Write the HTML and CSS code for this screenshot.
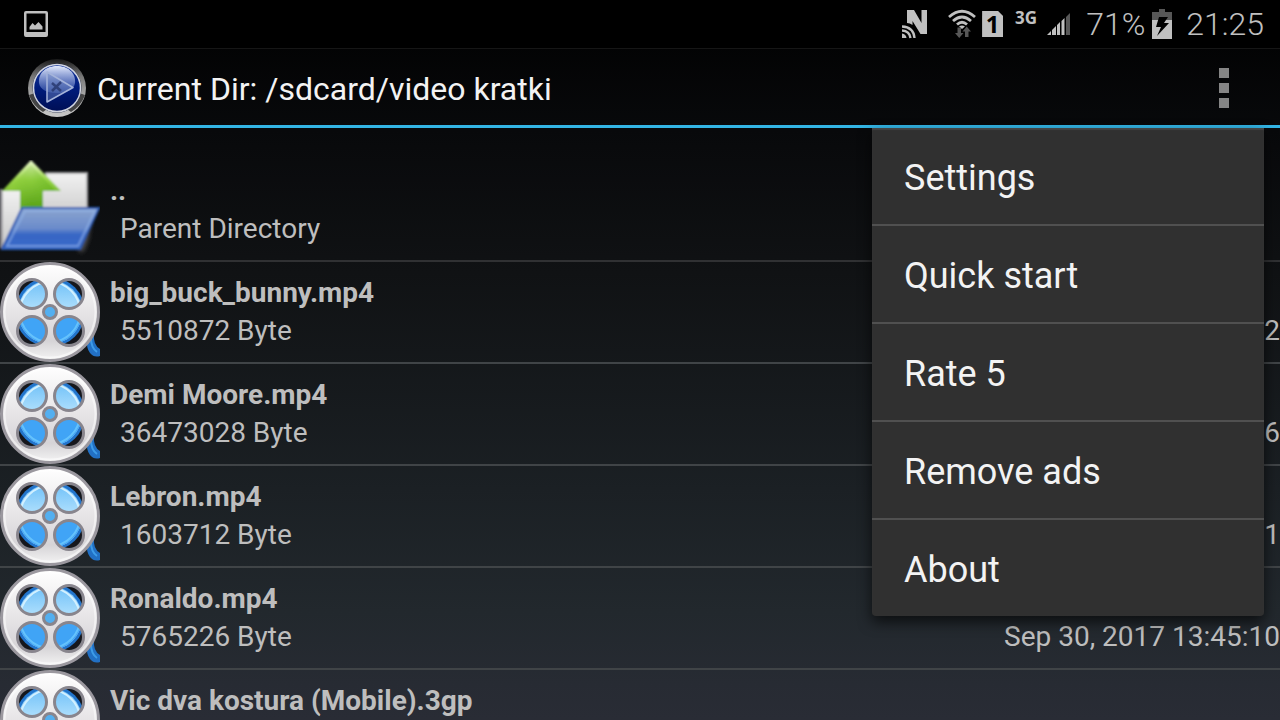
FILE: index.html
```
<!DOCTYPE html>
<html lang="en">
<head>
<meta charset="utf-8">
<meta name="viewport" content="width=device-width, initial-scale=1">
<title>Current Dir: /sdcard/video kratki</title>
<link rel="stylesheet" href="styles.css">
</head>
<body>
<svg class="defs" width="0" height="0" aria-hidden="true">
  <defs>
    <linearGradient id="reelBody" x1="0" y1="0" x2="0" y2="1">
      <stop offset="0" stop-color="#ffffff"/><stop offset=".45" stop-color="#e9e7e9"/><stop offset=".8" stop-color="#d6d4d7"/><stop offset="1" stop-color="#f4f4f4"/>
    </linearGradient>
    <linearGradient id="filmTop" x1="0" y1="0" x2="0" y2="1">
      <stop offset="0" stop-color="#6fc0f8"/><stop offset=".5" stop-color="#b4e2fd"/>
    </linearGradient>
    <filter id="reelSmooth" x="0" y="0" width="1" height="1"><feGaussianBlur stdDeviation=".6"/></filter>
    <clipPath id="holes"><circle cx="32" cy="32" r="14"/><circle cx="69" cy="32" r="14"/><circle cx="32" cy="69" r="14"/><circle cx="69" cy="69" r="14"/></clipPath>
    <symbol id="reel" viewBox="0 0 100 100">
      <g filter="url(#reelSmooth)">
        <path d="M87 76L94 72Q93 83 100 87V94Q94 96 90 91Q86 86 87 76Z" fill="#2070c4"/>
        <path d="M91 76Q91 86 97 90" fill="none" stroke="#3e9be8" stroke-width="2"/>
        <circle cx="50" cy="50" r="48.500" fill="url(#reelBody)" stroke="#9b989f" stroke-width="3"/>
        <circle cx="50" cy="50" r="45.500" fill="none" stroke="#fff" stroke-opacity=".5" stroke-width="2"/>
        <g clip-path="url(#holes)">
          <path d="M0 0H100V100H0Z" fill="#13191e"/>
          <circle cx="50" cy="50" r="35" fill="#2474cc"/>
          <circle cx="50" cy="50" r="32" fill="url(#filmTop)"/>
          <path d="M18 50A32 32 0 0 0 82 50Z" fill="#40a4f6"/>
          <path d="M20 50A30 30 0 0 1 80 50" fill="none" stroke="#d2f0ff" stroke-width="2"/>
          <path d="M20 50A30 30 0 0 0 80 50" fill="none" stroke="#65c2fc" stroke-width="2"/>
        </g>
        <g fill="none" stroke="#88858d" stroke-width="3"><circle cx="32" cy="32" r="14.500"/><circle cx="69" cy="32" r="14.500"/><circle cx="32" cy="69" r="14.500"/><circle cx="69" cy="69" r="14.500"/></g>
        <circle cx="50" cy="50" r="6.500" fill="#52aff0" stroke="#88858d" stroke-width="3"/>
      </g>
    </symbol>
  </defs>
</svg>

<div class="screen">
  <header class="status-bar">
    <svg class="shot-icon" width="24" height="26" viewBox="0 0 24 26" role="img" aria-label="Screenshot saved">
      <path fill="#c0c0c0" fill-rule="evenodd" d="M2 0H22Q24 0 24 2V24Q24 26 22 26H2Q0 26 0 24V2Q0 0 2 0ZM2.500 2.500V21H21.500V2.500Z"/>
      <path fill="#c0c0c0" d="M5.500 18.500V16L8.500 12L11 14.500L14.500 11L18.500 15.500V18.500Z"/>
    </svg>
    <div class="status-right">
      <svg width="26" height="30" viewBox="0 0 26 30" role="img" aria-label="NFC">
        <path fill="#c0c0c0" d="M5 1H12L19.500 14V1H25V25H18.500L10.500 12V16Q8 14 5 14Z"/>
        <g fill="none" stroke="#c0c0c0" stroke-width="2.400"><path d="M0 17.500Q11.500 18 12.500 29"/><path d="M0 21.500Q7.500 22 8.500 29"/></g>
        <path fill="#c0c0c0" d="M0 24.500Q4 25 4.500 29H0Z"/>
      </svg>
      <svg class="wifi" width="28" height="30" viewBox="0 0 28 30" role="img" aria-label="Wi-Fi">
        <g fill="none" stroke="#c0c0c0" stroke-width="2.800"><path d="M1 8Q14-3.500 27 8"/><path d="M5 12Q14 4 23 12"/><path d="M9 15.500Q14 11 19 15.500"/></g>
        <path fill="#c0c0c0" d="M11 17.500Q14 15.500 17 17.500L14 20Z"/>
        <g fill="#575757"><path d="M9.500 18.500H13V24H15.500L11.200 29L7 24H9.500Z"/><path d="M17 28H20.500V22.500H23L18.700 17.500L14.500 22.500H17Z"/></g>
      </svg>
      <span class="sim">1</span>
      <span class="network">3G</span>
      <svg class="signal" width="24" height="24" viewBox="0 0 24 24" role="img" aria-label="Signal strength">
        <path fill="#c0c0c0" d="M0 23L4 19V23ZM5 18L9 14V23H5ZM10 13L13 10V23H10ZM14.500 9L17.500 6V23H14.500Z"/>
        <path fill="#575757" d="M19 5L23 1V23H19Z"/>
      </svg>
      <span class="battery-level">71%</span>
      <svg class="battery" width="20" height="30" viewBox="0 0 20 30" role="img" aria-label="Battery charging">
        <path fill="#575757" d="M7 0H13V3H20V11H0V3H7Z"/>
        <path fill="#c0c0c0" d="M0 11H20V30H0Z"/>
        <path fill="#000" d="M7 8H16L12 14H17L5 27L9 18H4Z"/>
      </svg>
      <time class="clock">21:25</time>
    </div>
  </header>

  <div class="app-bar">
    <svg class="app-logo" width="60" height="60" viewBox="0 0 60 60" role="img" aria-label="Video player">
      <defs>
        <linearGradient id="rim" x1="0" y1="0" x2="0" y2="1"><stop offset="0" stop-color="#191919"/><stop offset=".3" stop-color="#777"/><stop offset=".6" stop-color="#a5a5a5"/><stop offset="1" stop-color="#c8c8c8"/></linearGradient>
        <linearGradient id="orb" x1="0" y1="0" x2="0" y2="1"><stop offset="0" stop-color="#1738a0"/><stop offset=".5" stop-color="#001c7c"/><stop offset="1" stop-color="#000f55"/></linearGradient>
        <linearGradient id="gloss" x1="0" y1="0" x2="0" y2="1"><stop offset="0" stop-color="#e3eafc"/><stop offset="1" stop-color="#4a68bb" stop-opacity=".5"/></linearGradient>
      </defs>
      <circle cx="30" cy="30" r="29" fill="url(#rim)"/>
      <path d="M2 37L8 35Q12 48 20 51L16 54Q6 48 2 37ZM58 37L52 35Q48 48 40 51L44 54Q54 48 58 37Z" fill="#444"/>
      <circle cx="30" cy="30" r="24.500" fill="#101a3b"/>
      <circle cx="30" cy="30" r="23.500" fill="url(#orb)" stroke="#d2d5df" stroke-width="1.500"/>
      <path d="M12 25C11 14 20 8 30 8S49 14 48 25C47 32 39 35 30 35S13 32 12 25Z" fill="url(#gloss)"/>
      <path d="M20 14L46 29.500L20 44Z" fill="#6c85c2" fill-opacity=".45" stroke="#a5b4da" stroke-width="1.500" stroke-linejoin="round"/>
      <path d="M25 25L34 33M34 24L25 33" stroke="#26366b" stroke-opacity=".8" stroke-width="2.500"/>
    </svg>
    <h1 class="title">Current Dir: /sdcard/video kratki</h1>
    <button class="more" type="button" aria-label="More options" aria-haspopup="menu" aria-expanded="true"><span class="dot"></span><span class="dot"></span><span class="dot"></span></button>
  </div>

  <main class="content">
    <ul class="files">
      <li class="row row-parent">
        <svg class="thumb" viewBox="0 0 100 100" aria-hidden="true">
          <defs>
            <linearGradient id="arrow" x1="0" y1="0" x2="0" y2="1"><stop offset="0" stop-color="#eefad0"/><stop offset=".4" stop-color="#98d545"/><stop offset="1" stop-color="#539b14"/></linearGradient>
            <linearGradient id="arrowSide" x1="0" y1="0" x2="1" y2="0"><stop offset="0" stop-color="#a4dc43" stop-opacity=".8"/><stop offset=".5" stop-color="#5bad18" stop-opacity=".3"/><stop offset="1" stop-color="#5faf19"/></linearGradient>
            <linearGradient id="folder" x1="0" y1="0" x2="0" y2="1"><stop offset="0" stop-color="#8ca5cf"/><stop offset=".5" stop-color="#6a8bcb"/><stop offset=".65" stop-color="#3866c5"/><stop offset="1" stop-color="#3768c8"/></linearGradient>
            <linearGradient id="paper" x1="0" y1="0" x2="0" y2="1"><stop offset="0" stop-color="#f1f1f1"/><stop offset="1" stop-color="#c7c7c7"/></linearGradient>
            <filter id="soft"><feGaussianBlur stdDeviation="2"/></filter>
            <filter id="smooth"><feGaussianBlur stdDeviation="1"/></filter>
          </defs>
          <g filter="url(#smooth)">
            <path d="M78 91L92 56L88 80L83 92Z" fill="#555" filter="url(#soft)"/>
            <path d="M46 13H87V62H36Z" fill="url(#paper)" stroke="#a7a7a9" stroke-width="2"/>
            <path d="M0 30H22V70L0 88Z" fill="url(#paper)"/>
            <path d="M1 29V88" stroke="#88878d" stroke-width="3"/>
            <path d="M31 0L61 31H43V50H20V31H2Z" fill="url(#arrow)"/>
            <path d="M31 5L56 31H43V49H20V31H7Z" fill="url(#arrowSide)" opacity=".6"/>
            <path d="M22 48H99L80 89H2Z" fill="url(#folder)" stroke="#2c5bb4" stroke-width="2"/>
            <path d="M25 51H95L78 86H7Z" fill="none" stroke="#93b6eb" stroke-opacity=".6" stroke-width="2"/>
          </g>
        </svg>
        <div class="info"><strong class="name">..</strong><div class="meta"><span>Parent Directory</span></div></div>
      </li>
      <li class="row">
        <svg class="thumb" aria-hidden="true"><use href="#reel"/></svg>
        <div class="info"><strong class="name">big_buck_bunny.mp4</strong><div class="meta"><span>5510872 Byte</span><span>2</span></div></div>
      </li>
      <li class="row">
        <svg class="thumb" aria-hidden="true"><use href="#reel"/></svg>
        <div class="info"><strong class="name">Demi Moore.mp4</strong><div class="meta"><span>36473028 Byte</span><span>6</span></div></div>
      </li>
      <li class="row">
        <svg class="thumb" aria-hidden="true"><use href="#reel"/></svg>
        <div class="info"><strong class="name">Lebron.mp4</strong><div class="meta"><span>1603712 Byte</span><span>1</span></div></div>
      </li>
      <li class="row">
        <svg class="thumb" aria-hidden="true"><use href="#reel"/></svg>
        <div class="info"><strong class="name">Ronaldo.mp4</strong><div class="meta"><span>5765226 Byte</span><time>Sep 30, 2017 13:45:10</time></div></div>
      </li>
      <li class="row">
        <svg class="thumb" aria-hidden="true"><use href="#reel"/></svg>
        <div class="info"><strong class="name">Vic dva kostura (Mobile).3gp</strong></div>
      </li>
    </ul>
    <div class="menu" role="menu">
      <button class="menu-item" type="button" role="menuitem">Settings</button>
      <button class="menu-item" type="button" role="menuitem">Quick start</button>
      <button class="menu-item" type="button" role="menuitem">Rate 5</button>
      <button class="menu-item" type="button" role="menuitem">Remove ads</button>
      <button class="menu-item" type="button" role="menuitem">About</button>
    </div>
  </main>
</div>
</body>
</html>
```
FILE: styles.css
```
* { box-sizing: border-box; }

body {
  margin: 0;
  background: #000;
  color: #bebebe;
  font-family: Roboto, "Noto Sans", sans-serif;
}

.defs { position: absolute; }

.screen {
  display: flex;
  flex-direction: column;
  height: 100vh;
  overflow: hidden;
  background: linear-gradient(#000 0, #08090b 18%, #101214 38%, #1b2024 68%, #22282d 85%, #272b33 95%, #292c35 100%);
}

/* Status bar */
.status-bar {
  display: flex;
  align-items: center;
  justify-content: space-between;
  flex: none;
  height: 49px;
  padding: 0 16px 0 24px;
  background: #000;
  border-bottom: 1px solid #161616;
}

.status-right {
  display: flex;
  align-items: center;
  color: #c0c0c0;
}

.wifi { margin-left: 20px; }

.sim {
  width: 21px;
  height: 26px;
  margin-left: 6px;
  background: #c0c0c0;
  clip-path: polygon(0 0, 76% 0, 100% 19%, 100% 100%, 0 100%);
  color: #000;
  font: 700 24px/26px "Open Sans", sans-serif;
  text-align: center;
}

.network {
  align-self: flex-start;
  margin: 4px 0 0 12px;
  font: 700 17px/18px "Open Sans", sans-serif;
}

.signal { margin-left: 10px; }

.battery-level,
.clock {
  font-size: 32px;
  line-height: 38px;
  font-weight: 300;
}

.battery-level { margin-left: 15px; }
.battery { margin-left: 7px; }
.clock { margin-left: 14px; }

/* App bar */
.app-bar {
  display: flex;
  align-items: center;
  flex: none;
  height: 79px;
  padding: 2px 0 0 27px;
  border-bottom: 3px solid #33b5e5;
}

.title {
  flex: 1;
  margin: 0 0 0 10px;
  padding-top: 2px;
  color: #f3f3f3;
  font-size: 32px;
  line-height: 38px;
  font-weight: 400;
}

.more {
  display: flex;
  flex-direction: column;
  align-items: center;
  justify-content: center;
  gap: 5px;
  width: 112px;
  height: 74px;
  padding: 0;
  border: 0;
  background: none;
}

.dot {
  width: 10px;
  height: 10px;
  background: #858585;
}

/* File list */
.content {
  position: relative;
  flex: 1;
  min-height: 0;
}

.files {
  margin: 0;
  padding: 0;
  list-style: none;
}

.row {
  display: flex;
  align-items: center;
  height: 102px;
  border-bottom: 2px solid #404447;
}

.row-parent {
  height: 134px;
  padding-top: 32px;
  border-bottom-color: #303133;
}

.thumb {
  flex: none;
  width: 100px;
  height: 100px;
}

.info {
  flex: 1;
  min-height: 76px;
  padding-left: 10px;
  font-size: 28px;
  line-height: 38px;
}

.name { display: block; }

.meta {
  display: flex;
  justify-content: space-between;
  padding-left: 10px;
}

/* Overflow menu */
.menu {
  position: absolute;
  top: 0;
  right: 16px;
  width: 392px;
  background: #303030;
  border-radius: 0 0 4px 4px;
  box-shadow: 0 6px 14px rgba(0, 0, 0, .65), inset 0 2px 1px #444;
}

.menu-item {
  display: block;
  width: 100%;
  height: 98px;
  padding: 4px 32px 0;
  border: 0;
  border-bottom: 2px solid #505050;
  background: none;
  color: #f3f3f3;
  font: 400 36px/42px Roboto, sans-serif;
  text-align: left;
}

.menu-item:last-child {
  height: 96px;
  border-bottom: 0;
}
```
